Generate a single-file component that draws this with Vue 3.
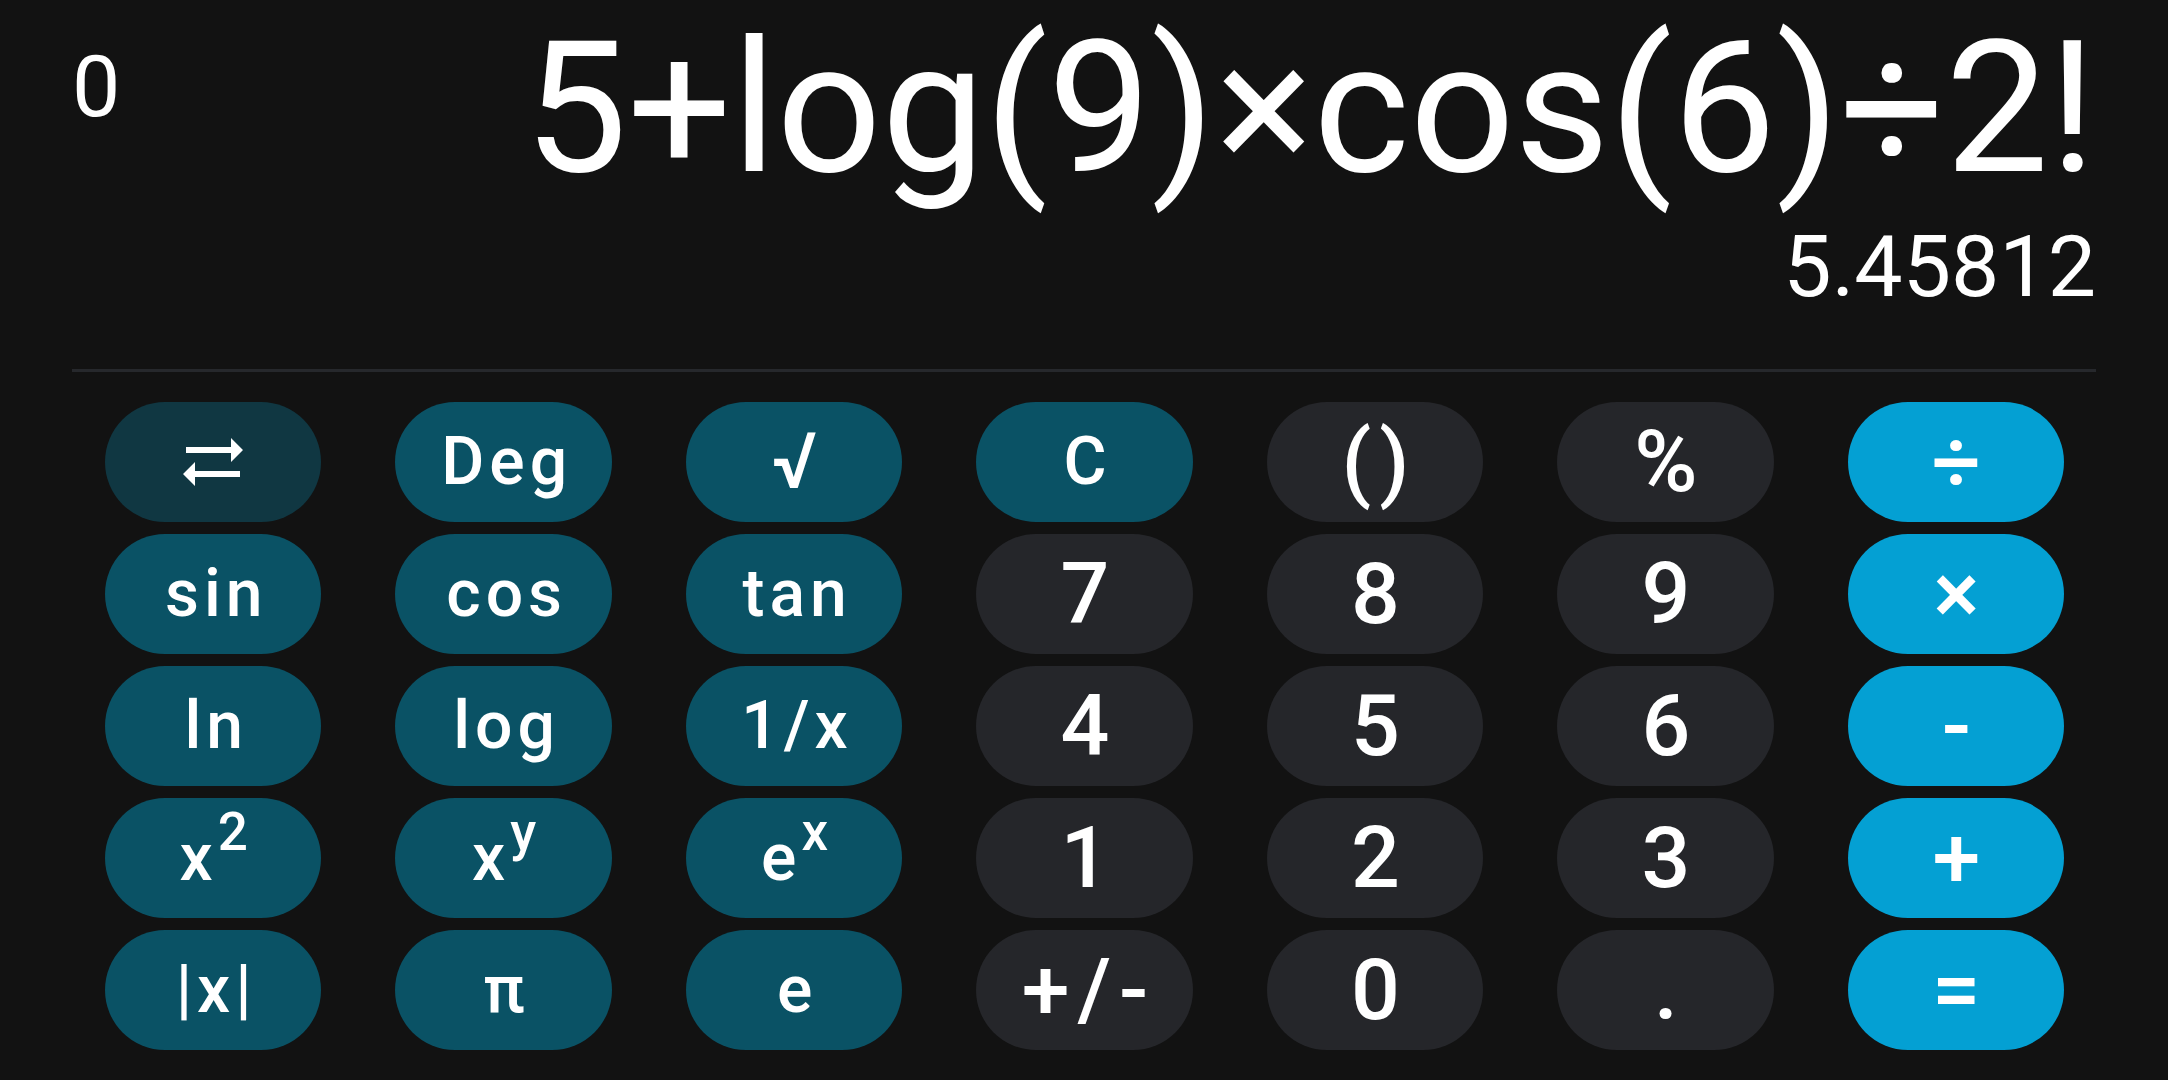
<script setup>
import { ref } from 'vue'

const memory = ref('0')
const expression = ref('5+log(9)×cos(6)÷2!')
const result = ref('5.45812')

const keys = [
  { icon: 'swap', tone: 'shift', name: 'Switch functions' },
  { label: 'Deg', tone: 'func' },
  { label: '√', tone: 'func radical' },
  { label: 'C', tone: 'func' },
  { label: '()', tone: 'digit' },
  { label: '%', tone: 'digit' },
  { label: '÷', tone: 'operator' },

  { label: 'sin', tone: 'func' },
  { label: 'cos', tone: 'func' },
  { label: 'tan', tone: 'func' },
  { label: '7', tone: 'digit' },
  { label: '8', tone: 'digit' },
  { label: '9', tone: 'digit' },
  { label: '×', tone: 'operator' },

  { label: 'ln', tone: 'func' },
  { label: 'log', tone: 'func' },
  { label: '1/x', tone: 'func' },
  { label: '4', tone: 'digit' },
  { label: '5', tone: 'digit' },
  { label: '6', tone: 'digit' },
  { label: '-', tone: 'operator' },

  { label: 'x', power: '2', tone: 'func' },
  { label: 'x', power: 'y', tone: 'func' },
  { label: 'e', power: 'x', tone: 'func' },
  { label: '1', tone: 'digit' },
  { label: '2', tone: 'digit' },
  { label: '3', tone: 'digit' },
  { label: '+', tone: 'operator' },

  { label: '|x|', tone: 'func' },
  { label: 'π', tone: 'func' },
  { label: 'e', tone: 'func' },
  { label: '+/-', tone: 'digit' },
  { label: '0', tone: 'digit' },
  { label: '.', tone: 'digit' },
  { label: '=', tone: 'operator' },
]
</script>

<template>
  <main class="calculator">
    <header class="display">
      <div class="memory">{{ memory }}</div>
      <div class="readout">
        <div class="expression">{{ expression }}</div>
        <output class="result">{{ result }}</output>
      </div>
    </header>

    <section class="keypad">
      <button
        v-for="(key, index) in keys"
        :key="index"
        type="button"
        class="key"
        :class="key.tone"
        :aria-label="key.name"
      >
        <svg v-if="key.icon" class="swap" viewBox="0 0 60 48" aria-hidden="true">
          <path d="M3 9H48V0L60 12L48 24V15H3Z" />
          <path d="M57 39H12V48L0 36L12 24V33H57Z" />
        </svg>
        <span v-else>{{ key.label }}<sup v-if="key.power">{{ key.power }}</sup></span>
      </button>
    </section>
  </main>
</template>

<style>
body {
  margin: 0;
  background: #121212;
}
</style>

<style scoped>
.calculator {
  color: #fff;
  font-family: Roboto, "Liberation Sans", sans-serif;
}

.display {
  display: flex;
  justify-content: space-between;
  margin: 0 72px;
  padding-bottom: 52px;
  border-bottom: 3px solid #26282c;
}

.memory {
  padding-top: 36px;
  font-size: 86px;
  line-height: 101px;
}

.readout {
  display: flex;
  flex-direction: column;
  align-items: flex-end;
}

.expression {
  font-size: 184px;
  line-height: 216px;
  white-space: nowrap;
}

.result {
  font-size: 86px;
  line-height: 101px;
}

.keypad {
  display: grid;
  grid-template-columns: repeat(7, 1fr);
  gap: 12px 74px;
  padding: 30px 104px 30px 105px;
}

.key {
  display: flex;
  align-items: center;
  justify-content: center;
  box-sizing: border-box;
  height: 120px;
  margin: 0;
  padding: 0;
  border: 0;
  border-radius: 60px;
  color: #fff;
  font-family: inherit;
  font-weight: 500;
  white-space: nowrap;
  cursor: pointer;
}

.shift {
  background: #103742;
}

.func {
  padding: 0 0 1px 6px;
  background: #0a5265;
  font-size: 66px;
  letter-spacing: 5px;
}

.radical {
  font-size: 78px;
}

.digit,
.operator {
  padding: 0 0 2px 9px;
  font-size: 86px;
  letter-spacing: 8px;
}

.digit {
  background: #25262a;
}

.operator {
  background: #04a0d3;
}

.key sup {
  font-size: 53px;
  line-height: 0;
  vertical-align: 30px;
}

.swap {
  width: 60px;
  height: 48px;
  fill: currentColor;
}
</style>
